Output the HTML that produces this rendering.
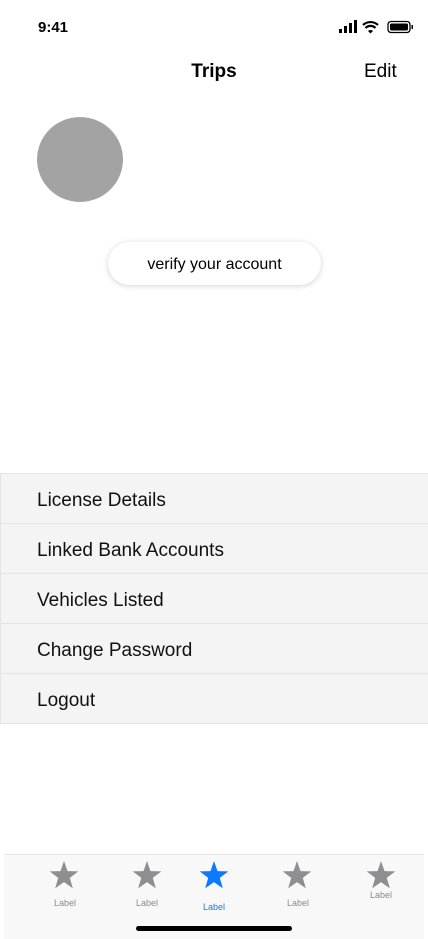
<!DOCTYPE html><html><head><style>
body{margin:0;width:428px;height:938px;position:relative;background:#fff;font-family:"Liberation Sans",sans-serif;overflow:hidden}
.a{position:absolute}
.row{position:absolute;left:0;width:426px;height:49px;background:#f4f4f4;border:1px solid #e4e4e4;font-size:19px;line-height:54px;color:#111;padding-left:36px;box-sizing:content-box}
.lab{position:absolute;font-size:9px;color:#8a8a8e;width:40px;text-align:center}
</style></head><body>
<div class="a" style="left:38px;top:19px;font-size:15px;font-weight:bold">9:41</div>
<svg class="a" style="left:338px;top:20px" width="76" height="15">
<rect x="1" y="9" width="3" height="4" fill="#000"/><rect x="6" y="6" width="3" height="7" fill="#000"/><rect x="11" y="3" width="3" height="10" fill="#000"/><rect x="16" y="0" width="3" height="13" fill="#000"/>
<path d="M25 5a11 11 0 0 1 15 0M27.5 8a7 7 0 0 1 10 0" stroke="#000" stroke-width="2.2" fill="none"/><path d="M30 11l2.5 2.5l2.5-2.5a3.5 3.5 0 0 0-5 0z" fill="#000"/>
<rect x="50" y="1.5" width="22" height="11" rx="3" fill="none" stroke="#000" stroke-width="1.3"/><rect x="52" y="3.5" width="18" height="7" rx="1.5" fill="#000"/><rect x="73.5" y="5" width="1.5" height="4" fill="#000"/>
</svg>
<div class="a" style="left:0;width:428px;top:61px;text-align:center;font-size:19px;font-weight:bold">Trips</div>
<div class="a" style="left:364px;top:61px;font-size:19px">Edit</div>
<div class="a" style="left:37px;top:117px;width:86px;height:85px;border-radius:50%;background:#a3a3a3"></div>
<div class="a" style="left:108px;top:242px;width:213px;height:43px;border-radius:22px;background:#fff;box-shadow:0 1px 6px rgba(0,0,0,.18);text-align:center;line-height:45px;font-size:16px">verify your account</div>
<div class="row" style="top:473px">License Details</div>
<div class="row" style="top:523px">Linked Bank Accounts</div>
<div class="row" style="top:573px">Vehicles Listed</div>
<div class="row" style="top:623px">Change Password</div>
<div class="row" style="top:673px">Logout</div>
<div class="a" style="left:4px;width:420px;top:854px;height:84px;background:#f8f8f8;border-top:1px solid #e6e6e6"></div>
<svg class="a" style="left:0;top:858px" width="428" height="36">
<defs><path id="s" d="M0-15L3.5-4.9L14.3-4.6L5.8 1.9L8.8 12.2L0 6.1L-8.8 12.2L-5.8 1.9L-14.3-4.6L-3.5-4.9z"/></defs>
<use href="#s" x="64" y="18" fill="#8e8e93"/><use href="#s" x="147" y="18" fill="#8e8e93"/><use href="#s" x="214" y="18" fill="#0a7aff"/><use href="#s" x="297" y="18" fill="#8e8e93"/><use href="#s" x="381" y="18" fill="#8e8e93"/>
</svg>
<div class="lab" style="left:45px;top:898px">Label</div>
<div class="lab" style="left:127px;top:898px">Label</div>
<div class="lab" style="left:194px;top:902px;color:#1a7ae8">Label</div>
<div class="lab" style="left:278px;top:898px">Label</div>
<div class="lab" style="left:361px;top:890px">Label</div>
<div class="a" style="left:136px;top:926px;width:156px;height:5px;border-radius:3px;background:#000"></div>
</body></html>
